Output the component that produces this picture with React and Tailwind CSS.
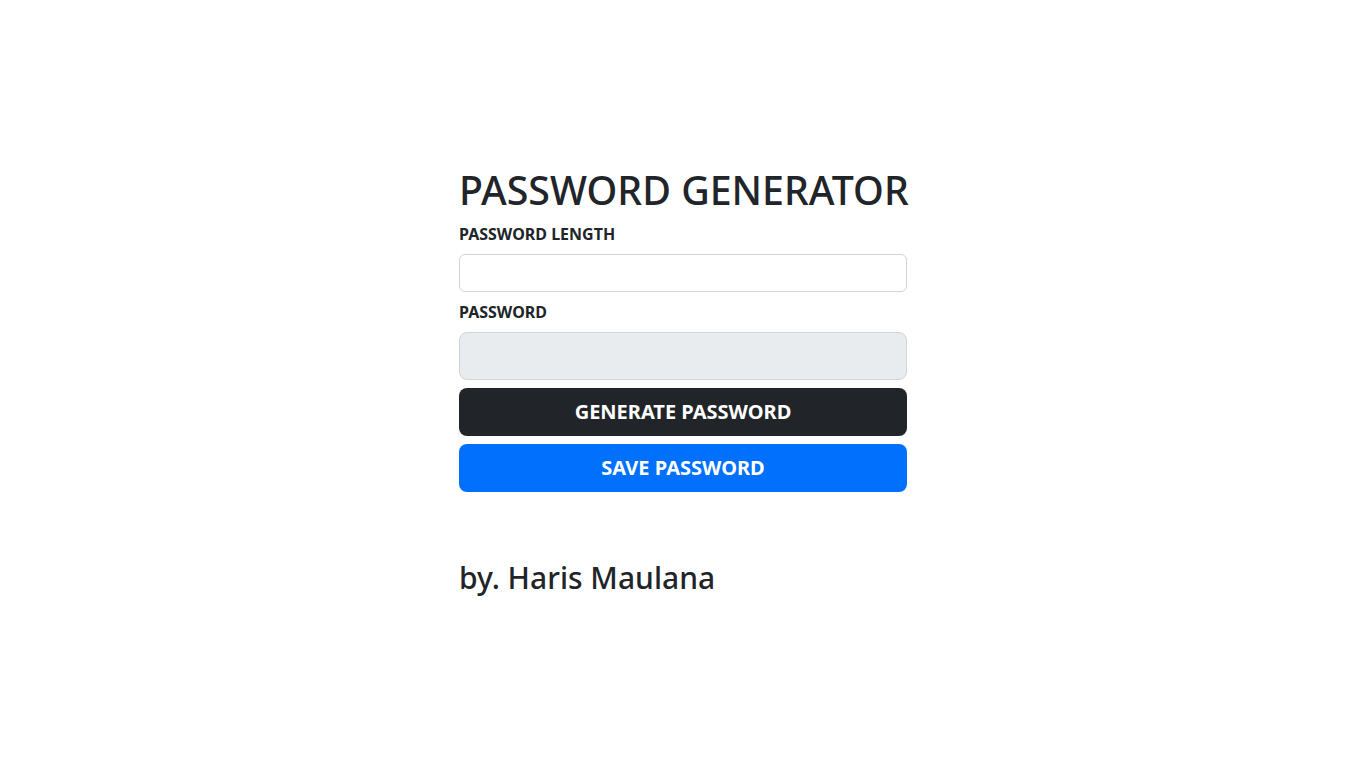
export default function App() {
  return (
    <div
      className="min-h-screen flex items-center justify-center bg-white text-[#212529]"
      style={{ fontFamily: '"Noto Sans", "Open Sans", sans-serif' }}
    >
      <div className="w-[448px] flex flex-col pb-[6px]">
        <h1 className="text-[39.3px] leading-[48px] font-medium whitespace-nowrap">PASSWORD GENERATOR</h1>
        <label className="mt-2 text-[16px] leading-[24px] font-bold">PASSWORD LENGTH</label>
        <input
          type="number"
          className="mt-2 h-[38px] w-full rounded-[6px] border border-[#ced4da] bg-white px-3 outline-none"
        />
        <label className="mt-2 text-[16px] leading-[24px] font-bold">PASSWORD</label>
        <input
          type="text"
          readOnly
          className="mt-2 h-[48px] w-full rounded-[8px] border border-[#ced4da] bg-[#e9ecef] px-4 outline-none"
        />
        <button className="mt-2 h-[48px] w-full rounded-[8px] bg-[#212529] text-white text-[20px] font-bold">
          GENERATE PASSWORD
        </button>
        <button className="mt-2 h-[48px] w-full rounded-[8px] bg-[#0070fd] text-white text-[20px] font-bold">
          SAVE PASSWORD
        </button>
        <h3 className="mt-[68px] text-[30px] leading-[1.2] font-medium">by. Haris Maulana</h3>
      </div>
    </div>
  );
}
